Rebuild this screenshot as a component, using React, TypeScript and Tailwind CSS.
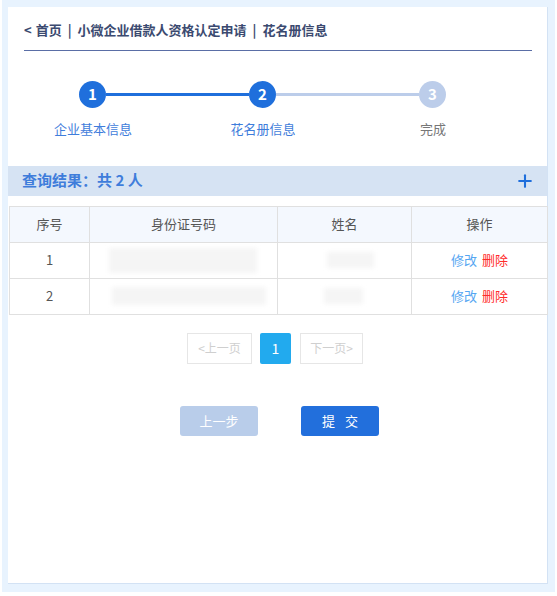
import React from 'react';
import { Plus } from 'lucide-react';

const font = { fontFamily: '"Noto Sans CJK SC", "Noto Sans", sans-serif' };

const rows = [
  { no: '1', idW: 148, idH: 25, idOff: 19, nameW: 47, nameH: 16, nameOff: 49 },
  { no: '2', idW: 154, idH: 18, idOff: 22, nameW: 39, nameH: 16, nameOff: 46 },
];

function Step({ n, active }: { n: number; active: boolean }) {
  return (
    <div
      className={`flex h-[27px] w-[27px] shrink-0 items-center justify-center rounded-full text-[15px] font-bold text-white ${
        active ? 'bg-[#1f6fdc]' : 'bg-[#bccdea]'
      }`}
    >
      {n}
    </div>
  );
}

export default function App() {
  return (
    <div className="h-[596px] w-[557px] bg-white" style={font}>
      <div className="ml-[2px] h-[592px] w-[553px] bg-[#e8f3fe] px-[6px] pt-[7px]">
        <div className="h-[577px] w-[540px] border-r border-b border-[#d3e2f4] bg-white">
          {/* breadcrumb */}
          <div className="px-4 pt-[14px]">
            <div className="flex h-[18px] items-center text-[13px] font-bold text-[#3b4a70]">
              <span className="mr-[4px]">&lt;</span>首页 <span className="mx-[6px]">|</span> 小微企业借款人资格认定申请
              <span className="mx-[6px]">|</span> 花名册信息
            </div>
            <div className="mt-[11px] h-px w-[508px] bg-[#5a6ea6]" />
          </div>

          {/* steps */}
          <div className="mt-[30px] flex items-center pl-[71px]">
            <Step n={1} active />
            <div className="h-[3px] w-[143px] bg-[#1f6fdc]" />
            <Step n={2} active />
            <div className="h-[3px] w-[143px] bg-[#bccdea]" />
            <Step n={3} active={false} />
          </div>
          <div className="mt-[11px] grid w-[510px] grid-cols-3 text-center text-[13px]">
            <div className="text-[#3f7ddb]">企业基本信息</div>
            <div className="text-[#3f7ddb]">花名册信息</div>
            <div className="text-[#777]">完成</div>
          </div>

          {/* result header */}
          <div className="mt-[27px] flex h-[30px] items-center justify-between bg-[#d6e3f3] pr-[12px] pl-[14px]">
            <div className="text-[15px] font-bold text-[#3f7ddb]">查询结果：共 2 人</div>
            <Plus size={20} strokeWidth={2.5} className="text-[#1f6fdc]" />
          </div>

          {/* table */}
          <div className="mt-[10px] ml-px w-[539px] border border-[#e0e0e0] text-[13px] text-[#555]">
            <div className="grid h-[35px] grid-cols-[80px_188px_134px_1fr] bg-[#f4f8fe]">
              <div className="flex items-center justify-center border-r border-[#e0e0e0]">序号</div>
              <div className="flex items-center justify-center border-r border-[#e0e0e0]">身份证号码</div>
              <div className="flex items-center justify-center border-r border-[#e0e0e0]">姓名</div>
              <div className="flex items-center justify-center">操作</div>
            </div>
            {rows.map((r) => (
              <div
                key={r.no}
                className="grid h-[36px] grid-cols-[80px_188px_134px_1fr] border-t border-[#e0e0e0]"
              >
                <div className="flex items-center justify-center border-r border-[#e0e0e0]">
                  {r.no}
                </div>
                <div className="flex items-center border-r border-[#e0e0e0]">
                  <div
                    className="bg-[#f5f5f5] blur-[2px]"
                    style={{ width: r.idW, height: r.idH, marginLeft: r.idOff }}
                  />
                </div>
                <div className="flex items-center border-r border-[#e0e0e0]">
                  <div
                    className="bg-[#f5f5f5] blur-[2px]"
                    style={{ width: r.nameW, height: r.nameH, marginLeft: r.nameOff }}
                  />
                </div>
                <div className="flex items-center justify-center gap-[5px]">
                  <span className="text-[#55a6f2]">修改</span>
                  <span className="text-[#ff2b2b]">删除</span>
                </div>
              </div>
            ))}
          </div>

          {/* pagination */}
          <div className="mt-[18px] flex items-center pl-[179px] text-[12px]">
            <div className="flex h-[31px] w-[65px] items-center justify-center border border-[#e6e6e6] text-[#cfcfcf]">
              &lt;上一页
            </div>
            <div className="ml-[8px] flex h-[31px] w-[31px] items-center justify-center rounded-[2px] bg-[#22aaee] text-[14px] text-white">
              1
            </div>
            <div className="ml-[9px] flex h-[31px] w-[63px] items-center justify-center border border-[#e6e6e6] text-[#cfcfcf]">
              下一页&gt;
            </div>
          </div>

          {/* buttons */}
          <div className="mt-[42px] flex items-center gap-[43px] pl-[172px] text-[13px] text-white">
            <div className="flex h-[30px] w-[78px] items-center justify-center rounded-[3px] bg-[#b9cdea]">
              上一步
            </div>
            <div className="flex h-[30px] w-[78px] items-center justify-center rounded-[3px] bg-[#226fdc] tracking-[10px] pl-[10px]">
              提交
            </div>
          </div>
        </div>
      </div>
    </div>
  );
}
